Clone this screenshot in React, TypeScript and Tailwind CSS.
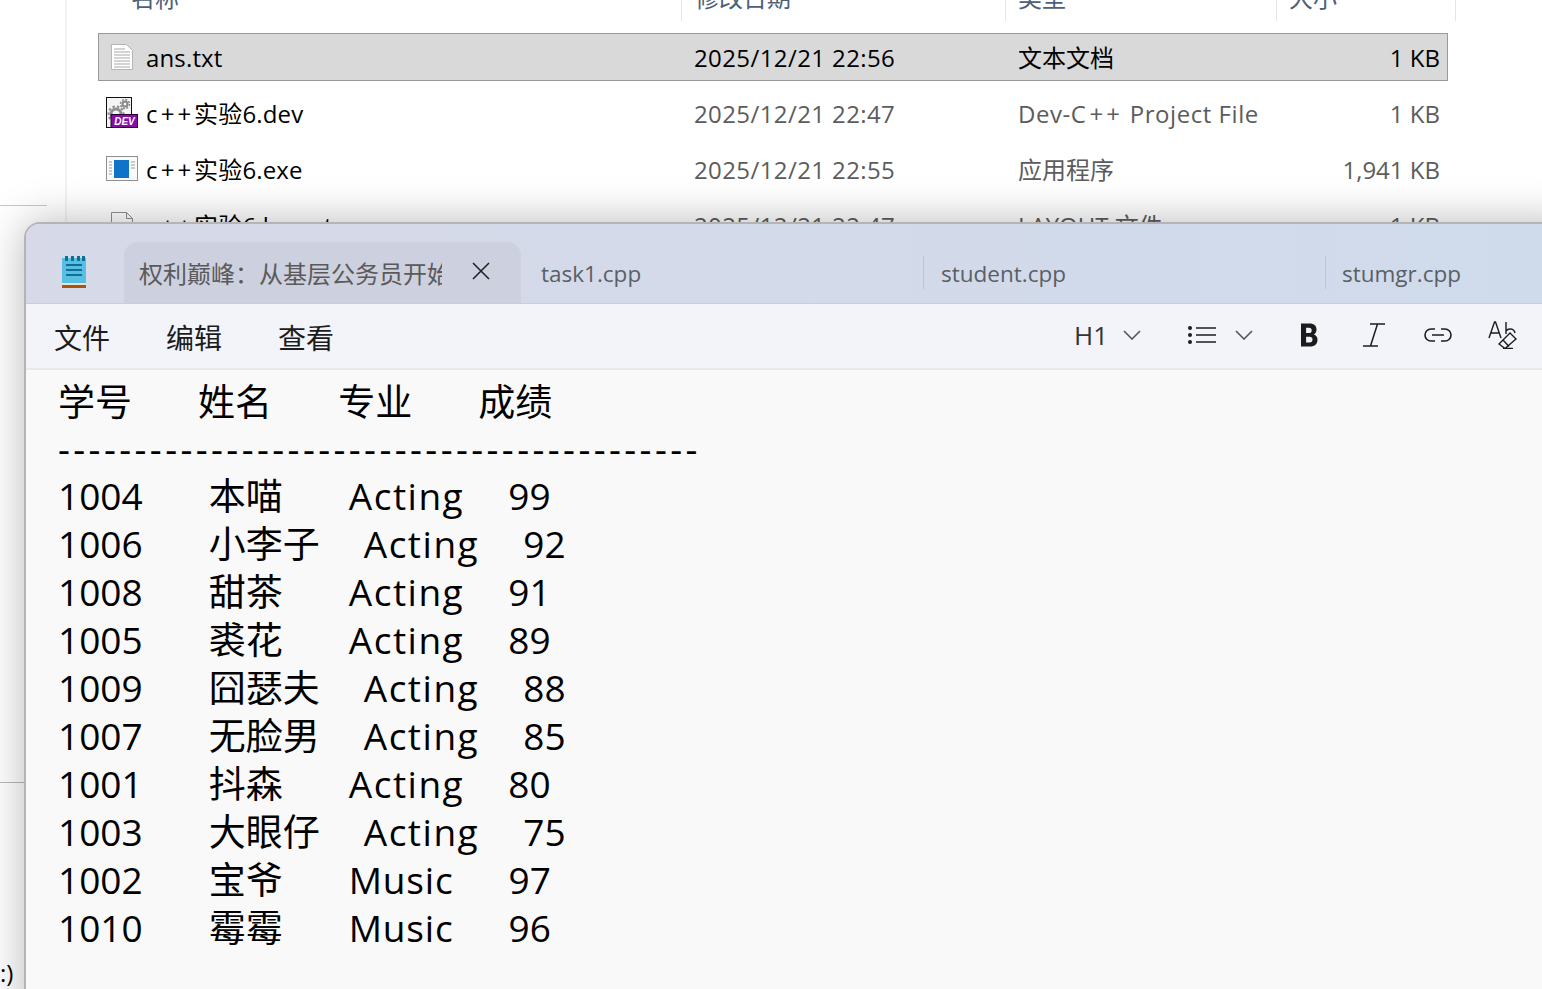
const sans = "font-['Open_Sans','Noto_Sans_CJK_SC',sans-serif]";

const files = [
  { name: "ans.txt", date: "2025/12/21 22:56", type: "文本文档", size: "1 KB", icon: "txt", active: true },
  { name: "c++实验6.dev", date: "2025/12/21 22:47", type: "Dev-C++ Project File", size: "1 KB", icon: "dev" },
  { name: "c++实验6.exe", date: "2025/12/21 22:55", type: "应用程序", size: "1,941 KB", icon: "exe" },
  { name: "c++实验6.layout", date: "2025/12/21 22:47", type: "LAYOUT 文件", size: "1 KB", icon: "blank" },
];

const rows = [
  "1004      本喵      Acting    99",
  "1006      小李子    Acting    92",
  "1008      甜茶      Acting    91",
  "1005      裘花      Acting    89",
  "1009      囧瑟夫    Acting    88",
  "1007      无脸男    Acting    85",
  "1001      抖森      Acting    80",
  "1003      大眼仔    Acting    75",
  "1002      宝爷      Music     97",
  "1010      霉霉      Music     96",
];

// 加号在原图里更宽，单独拉开
function Plus({ text }: { text: string }) {
  const parts = text.split("++");
  if (parts.length === 1) return <>{text}</>;
  return (
    <>
      {parts[0]}
      <span className="ml-[3px] tracking-[3px]">++</span>
      {parts[1]}
    </>
  );
}

function Row({ text }: { text: string }) {
  return (
    <div className="h-[48px] whitespace-pre">
      {text.split(/(Acting|Music)/).map((p, i) =>
        p === "Acting" ? (
          <span key={i} className="tracking-[1.5px]">{p}</span>
        ) : p === "Music" ? (
          <span key={i} className="tracking-[0.8px]">{p}</span>
        ) : (
          <span key={i}>{p}</span>
        )
      )}
    </div>
  );
}

function FileIcon({ kind }: { kind: string }) {
  if (kind === "txt") {
    return (
      <svg width="24" height="28" viewBox="0 0 24 28">
        <path d="M1.5 1.5h15l6 6v19h-21z" fill="#fff" stroke="#b5b5b5" />
        <path d="M4 6h11M4 9h16M4 12h16M4 15h16M4 18h16M4 21h16M4 24h16" stroke="#a8a8a8" />
      </svg>
    );
  }
  if (kind === "dev") {
    return (
      <svg width="32" height="32" viewBox="0 0 32 32">
        <rect x="0.5" y="0.5" width="25" height="30" fill="#f4f4f4" stroke="#111" />
        <circle cx="10" cy="17" r="5" fill="none" stroke="#8f8f8f" strokeWidth="3" />
        <circle cx="10" cy="17" r="7.5" fill="none" stroke="#8f8f8f" strokeWidth="2" strokeDasharray="2.5 2" />
        <circle cx="19" cy="7" r="2.5" fill="none" stroke="#858585" strokeWidth="2" />
        <circle cx="19" cy="7" r="4.5" fill="none" stroke="#858585" strokeWidth="1.5" strokeDasharray="2 1.500" />
        <rect x="5" y="17.500" width="26.500" height="13" fill="#8a0aa8" stroke="#220033" />
        <text x="18.500" y="28" textAnchor="middle" fontSize="10" fontWeight="700" fontStyle="italic" fill="#fff" fontFamily="'Liberation Sans'">DEV</text>
      </svg>
    );
  }
  if (kind === "exe") {
    return (
      <svg width="32" height="26" viewBox="0 0 32 26">
        <rect x="0.5" y="0.5" width="31" height="24" fill="#fafafa" stroke="#8f8f8f" />
        <rect x="8" y="4" width="15" height="18" fill="#0f74c8" />
        <path d="M3 6h3M3 9h3M3 12h3M3 15h3M3 18h3M25 6h4M25 9h4M25 12h4" stroke="#9b9b9b" />
      </svg>
    );
  }
  return (
    <svg width="24" height="28" viewBox="0 0 24 28">
      <path d="M1.5 1.5h15l6 6v19h-21z" fill="#fff" stroke="#8f8f8f" />
      <path d="M16.5 1.5v6h6" fill="none" stroke="#8f8f8f" />
    </svg>
  );
}

function NotepadIcon() {
  return (
    <svg width="26" height="34" viewBox="0 0 26 34">
      <rect x="1" y="3" width="24" height="25" fill="#58bfe2" />
      <path d="M4 1h3v5H4zM10 1h3v5h-3zM16 1h3v5h-3zM21 1h3v5h-3z" fill="#0f6f94" />
      <path d="M5 10h16M5 15h16M5 20h16" stroke="#0f6f94" strokeWidth="2" />
      <rect x="1" y="28" width="24" height="2" fill="#e9e2da" />
      <rect x="1" y="30" width="24" height="3" fill="#a95409" />
    </svg>
  );
}

function Chevron({ className }: { className: string }) {
  return (
    <svg className={className} width="18" height="10" viewBox="0 0 18 10" fill="none" stroke="#555" strokeWidth="1.6">
      <path d="M1 1l8 8 8-8" />
    </svg>
  );
}

export default function App() {
  return (
    <div className={`relative h-[989px] w-[1542px] overflow-hidden bg-white ${sans}`}>
      {/* 资源管理器 */}
      <div className="flex h-full">
        <div className="w-[67px] shrink-0 border-r-2 border-[#f3f3f3]">
          <div className="mt-[205px] h-px w-[47px] bg-[#c8c8c8]" />
          <div className="mt-[576px] h-px w-full bg-[#b9b9b9]" />
          <div className="mt-[178px] text-[24px] leading-[24px] text-black">:)</div>
        </div>
        <div className="flex-1">
          <div className="flex h-[21px] text-[24px] leading-[24px] text-[#4c607a]">
            <div className="w-[614px] pl-[64px]"><div className="-mt-[14px]">名称</div></div>
            <div className="w-[324px] border-l border-[#e5e5e5] pl-[13px]"><div className="-mt-[14px]">修改日期</div></div>
            <div className="w-[271px] border-l border-[#e5e5e5] pl-[12px]"><div className="-mt-[14px]">类型</div></div>
            <div className="w-[180px] border-x border-[#e5e5e5] pl-[12px]"><div className="-mt-[14px]">大小</div></div>
          </div>
          <div className="mt-[12px] w-[1381px] pl-[31px]">
            {files.map((f) => (
              <div
                key={f.name}
                className={`mb-[8px] flex h-[48px] items-center text-[24px] ${f.active ? "border border-[#999] bg-[#d9d9d9]" : "border border-transparent"}`}
              >
                <div className="flex w-[47px] shrink-0 justify-center pr-[1px]">
                  <FileIcon kind={f.icon} />
                </div>
                <div className="w-[548px] pt-[2px] tracking-[0.15px] text-black"><Plus text={f.name} /></div>
                <div className={`w-[324px] pt-[2px] tracking-[0.4px] ${f.active ? "text-black" : "text-[#5c5c5c]"}`}>{f.date}</div>
                <div className={`w-[270px] pt-[2px] ${f.active ? "text-black" : f.type.startsWith("Dev") ? "tracking-[0.55px] text-[#5c5c5c]" : "text-[#5c5c5c]"}`}><Plus text={f.type} /></div>
                <div className={`flex-1 pr-[7px] pt-[2px] text-right ${f.active ? "text-black" : "text-[#5c5c5c]"}`}>{f.size}</div>
              </div>
            ))}
          </div>
        </div>
      </div>

      {/* 记事本窗口 */}
      <div className="absolute left-[24px] top-[222px] h-[800px] w-[1560px] rounded-tl-[16px] border-l-2 border-t-2 border-[#b4b4b4] bg-[#f9f9f9] shadow-[0_0_44px_rgba(0,0,0,0.28)]">
        <div className="flex h-[80px] items-end rounded-tl-[14px] border-b border-[#c8cedd] bg-gradient-to-r from-[#d7d9e8] to-[#cfdbeb]">
          <div className="flex h-full w-[98px] shrink-0 items-center justify-center pr-[2px] pt-[16px]">
            <NotepadIcon />
          </div>
          <div className="flex h-[61px] w-[397px] shrink-0 items-center rounded-t-[14px] bg-[#cdd0df] pl-[15px] text-[24px] text-[#5a5a5a]">
            <span className="w-[303px] overflow-hidden whitespace-nowrap pt-[2px]">权利巅峰：从基层公务员开始</span>
            <svg className="mb-[3px] ml-[30px]" width="18" height="18" viewBox="0 0 18 18" fill="none" stroke="#222" strokeWidth="1.6">
              <path d="M1 1l16 16M17 1L1 17" />
            </svg>
          </div>
          <div className="flex h-[62px] w-[402px] shrink-0 items-center pl-[20px] text-[22.5px] text-[#5a5f66]">
            <span className="pt-[4px]">task1.cpp</span>
          </div>
          <div className="flex h-[62px] w-[402px] shrink-0 items-center text-[22.5px] text-[#5a5f66]">
            <span className="mr-[17px] h-[33px] w-px bg-[#bcc5d4]" />
            <span className="pt-[4px]">student.cpp</span>
          </div>
          <div className="flex h-[62px] flex-1 items-center text-[22.5px] text-[#5a5f66]">
            <span className="mr-[16px] h-[33px] w-px bg-[#bcc5d4]" />
            <span className="pt-[4px]">stumgr.cpp</span>
          </div>
        </div>

        <div className="flex h-[66px] items-center border-b-2 border-[#e6e8ee] bg-[#f2f4f9] pl-[28px] text-[28px] text-[#1c1c1c]">
          <span className="mr-[56px] pt-[4px]">文件</span>
          <span className="mr-[56px] pt-[4px]">编辑</span>
          <span className="pt-[4px]">查看</span>
          <div className="mb-[2px] ml-[740px] flex items-center text-[#1c1c1c]">
            <span className="w-[31px] whitespace-nowrap text-[26px] text-[#333]">H1</span>
            <Chevron className="ml-[18px]" />
            <svg className="ml-[47px]" width="28" height="18" viewBox="0 0 28 18" fill="none" stroke="#1c1c1c" strokeWidth="1.6">
              <path d="M8 2h20M8 9h20M8 16h20" />
              <g fill="#1c1c1c" stroke="none">
                <circle cx="2" cy="2" r="2" />
                <circle cx="2" cy="9" r="2" />
                <circle cx="2" cy="16" r="2" />
              </g>
            </svg>
            <Chevron className="ml-[19px]" />
            <svg className="ml-[47px]" width="18" height="24" viewBox="0 0 17 24" fill="#1c1c1c" fillRule="evenodd">
              <path d="M0.500 0.500h8.500c4.800 0 7 2.500 7 6.200 0 2.200-1 3.800-2.700 4.700 2.500.7 3.700 2.600 3.700 5.300 0 4.200-2.700 6.800-7.500 6.800H0.500zM5.600 4.800V10h2.800c1.900 0 2.800-.9 2.800-2.600 0-1.700-.9-2.600-2.800-2.600zM5.600 13.800v5.700h3.400c2 0 3-1 3-2.900 0-1.900-1.100-2.800-3.100-2.800z" />
            </svg>
            <svg className="ml-[44px]" width="24" height="24" viewBox="0 0 24 24" fill="none" stroke="#1c1c1c" strokeWidth="1.5">
              <path d="M8 1h15M1 23h15M15.500 1 8.500 23" />
            </svg>
            <svg className="ml-[38px]" width="28" height="14" viewBox="0 0 28 14" fill="none" stroke="#1c1c1c" strokeWidth="1.6">
              <path d="M11 1H7a6 6 0 0 0 0 12h4M17 1h4a6 6 0 0 1 0 12h-4M8 7h12" />
            </svg>
            <svg className="ml-[36px]" width="29" height="28" viewBox="0 0 29 28" fill="none" stroke="#1c1c1c" strokeWidth="1.4">
              <path d="M1 17 6.500 1h1L13 17M3 12h8M18 1v12M18 10c2-3 8-3 9 2" />
              <path d="M11 23 22 12l6 6-11 9.500zM15 19l6 6.500M15 27.500h10" fill="#f2f4f9" />
            </svg>
          </div>
        </div>

        <div className="pl-[32px] pt-[8px] text-[37px] leading-[48px] text-black [word-spacing:1.4px]">
          <div className="h-[48px] whitespace-pre">学号      姓名      专业      成绩</div>
          <div className="-mt-px h-[47px] whitespace-pre tracking-[3.4px]">------------------------------------------</div>
          <div>
            {rows.map((r) => (
              <Row key={r} text={r} />
            ))}
          </div>
        </div>
      </div>
    </div>
  );
}
